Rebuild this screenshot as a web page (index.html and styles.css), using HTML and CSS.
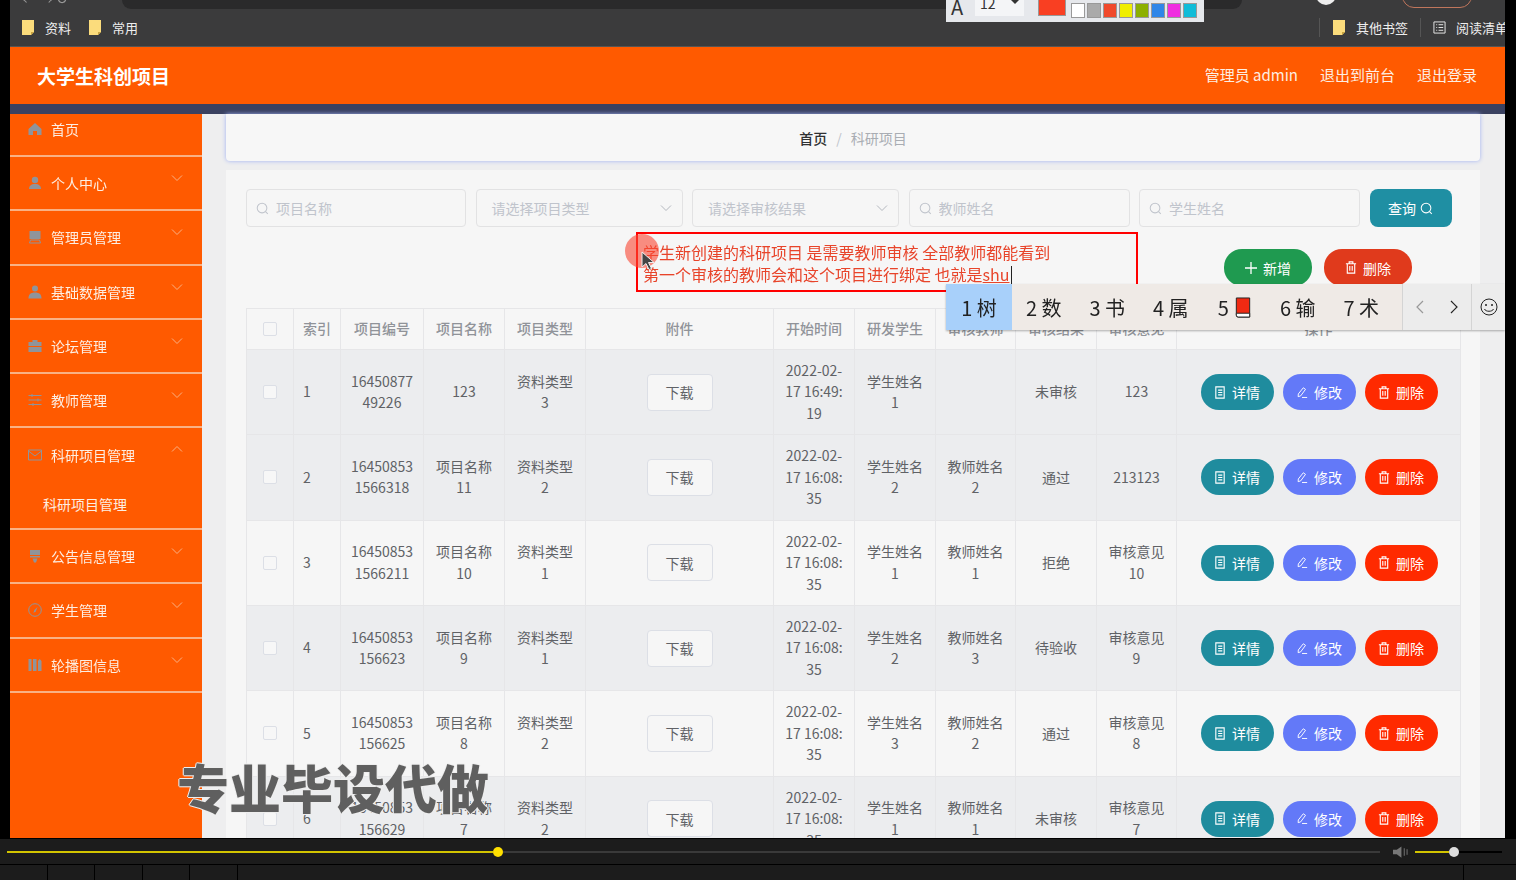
FILE: index.html
```html
<!DOCTYPE html>
<html lang="zh-CN">
<head>
  <meta charset="UTF-8" />
  <title>大学生科创项目</title>
  <link rel="stylesheet" href="styles.css">
</head>
<body>
  <svg class="defs" width="0" height="0">
    <symbol id="i-search" viewBox="0 0 14 14"><circle cx="6.5" cy="6.5" r="5.2" fill="none" stroke="currentColor" stroke-width="1.1"/><path d="M10.3 10.3l2.4 2.4" stroke="currentColor" stroke-width="1.1"/></symbol>
    <symbol id="i-down" viewBox="0 0 12 12"><path d="M1 3.5l5 5 5-5" fill="none" stroke="currentColor" stroke-width="1"/></symbol>
    <symbol id="i-up" viewBox="0 0 12 12"><path d="M1 8.5l5-5 5 5" fill="none" stroke="currentColor" stroke-width="1"/></symbol>
    <symbol id="i-doc" viewBox="0 0 12 14"><path d="M1.5 1h9v12h-9zM4 4.5h4.5M4 7h4.5M4 9.5h4.5" fill="none" stroke="currentColor" stroke-width="1.2"/></symbol>
    <symbol id="i-edit" viewBox="0 0 14 14"><path d="M8.5 1.5l2.6 1.8-5.6 7.6-3 1 .2-3.2zM7 12.8h6" fill="none" stroke="currentColor" stroke-width="1.1"/></symbol>
    <symbol id="i-trash" viewBox="0 0 12 14"><path d="M.5 3h11M4 3V1h4v2M2 3v10h8V3M4.7 5.5v5M7.3 5.5v5" fill="none" stroke="currentColor" stroke-width="1.2"/></symbol>
    <symbol id="i-folder" viewBox="0 0 12 15"><path d="M0 0h12v12l-3 3H0z" fill="#fbdc7c"/><path d="M9 15v-3h3z" fill="#c9a440"/></symbol>
  </svg>

  <div class="screen">
    <div class="browser">
      <div class="browser-top">
        <span class="nav-dots">&#8592; &#8594; &#8635;</span>
        <div class="url-bar"></div>
        <span class="profile-dot"></span>
        <span class="update-pill"></span>
      </div>
      <div class="bookmarks">
        <span class="mark"><svg class="folder"><use href="#i-folder"/></svg>资料</span>
        <span class="mark"><svg class="folder"><use href="#i-folder"/></svg>常用</span>
        <span class="mark mark-other"><svg class="folder"><use href="#i-folder"/></svg>其他书签</span>
        <span class="mark mark-read">
          <svg class="list-icon" viewBox="0 0 14 14"><path d="M1 1h12v12H1zM3.5 4h1M6 4h5M3.5 7h1M6 7h5M3.5 10h1M6 10h5" fill="none" stroke="currentColor"/></svg>阅读清单
        </span>
      </div>
    </div>

    <header class="topbar">
      <div class="brand">大学生科创项目</div>
      <nav class="top-links">
        <span>管理员 admin</span>
        <span>退出到前台</span>
        <span>退出登录</span>
      </nav>
    </header>
    <div class="navy-strip"></div>

    <div class="app">
      <aside class="sidebar">
        <div class="menu-item first">
          <svg class="menu-icon" viewBox="0 0 14 14"><path d="M7 1L0.5 7v6h4.5V9h4v4h4.5V7z" fill="currentColor"/></svg>首页
        </div>
        <div class="menu-item">
          <svg class="menu-icon" viewBox="0 0 14 14"><circle cx="7" cy="4" r="3.2" fill="currentColor"/><path d="M1 13c0-3 2-5 6-5s6 2 6 5z" fill="currentColor"/></svg>个人中心
          <svg class="chevron"><use href="#i-down"/></svg>
        </div>
        <div class="menu-item">
          <svg class="menu-icon" viewBox="0 0 14 14"><path d="M1.500 1h11v8h-11z" fill="currentColor"/><path d="M2.500 10h9l1 3h-11z" fill="none" stroke="currentColor"/></svg>管理员管理
          <svg class="chevron"><use href="#i-down"/></svg>
        </div>
        <div class="menu-item">
          <svg class="menu-icon" viewBox="0 0 14 14"><circle cx="7" cy="3.600" r="3" fill="currentColor"/><path d="M0.500 13.500c0-4 2-6 6.500-6s6.500 2 6.500 6z" fill="currentColor"/></svg>基础数据管理
          <svg class="chevron"><use href="#i-down"/></svg>
        </div>
        <div class="menu-item">
          <svg class="menu-icon" viewBox="0 0 14 14"><path d="M4.500 3V1h5v2h4v4h-13V3zM0.500 8h13v5h-13z" fill="currentColor"/></svg>论坛管理
          <svg class="chevron"><use href="#i-down"/></svg>
        </div>
        <div class="menu-item">
          <svg class="menu-icon" viewBox="0 0 14 14"><path d="M0.500 2.500h13M0.500 7h13M0.500 11.500h13M4 1v3M10 5.500v3M5 10v3" fill="none" stroke="currentColor"/></svg>教师管理
          <svg class="chevron"><use href="#i-down"/></svg>
        </div>
        <div class="menu-group">
          <div class="menu-item open">
            <svg class="menu-icon" viewBox="0 0 14 14"><path d="M0.500 2h13v10h-13zM0.500 3l6.500 5 6.500-5" fill="none" stroke="currentColor"/></svg>科研项目管理
            <svg class="chevron"><use href="#i-up"/></svg>
          </div>
          <div class="submenu-item">科研项目管理</div>
        </div>
        <div class="menu-item">
          <svg class="menu-icon" viewBox="0 0 14 14"><path d="M2 1h10v5H2zM2 7h10v1.500H2zM4.500 9.500h5L8 13.500H6z" fill="currentColor"/></svg>公告信息管理
          <svg class="chevron"><use href="#i-down"/></svg>
        </div>
        <div class="menu-item">
          <svg class="menu-icon" viewBox="0 0 14 14"><circle cx="7" cy="7" r="6.300" fill="none" stroke="currentColor"/><path d="M9.500 4L7.800 8.200 5.500 10l.8-3z" fill="currentColor"/></svg>学生管理
          <svg class="chevron"><use href="#i-down"/></svg>
        </div>
        <div class="menu-item">
          <svg class="menu-icon" viewBox="0 0 14 14"><path d="M0.500 1h3v12h-3zM5 1h3.500v12H5zM10 3l1.700-2 1.800 2v10H10z" fill="currentColor"/></svg>轮播图信息
          <svg class="chevron"><use href="#i-down"/></svg>
        </div>
      </aside>

      <main class="main">
        <div class="breadcrumb">
          <b>首页</b><i>/</i><span>科研项目</span>
        </div>

        <section class="card">
          <div class="filters">
            <label class="field w-220"><svg class="field-icon"><use href="#i-search"/></svg><input placeholder="项目名称"></label>
            <div class="field select w-207"><span>请选择项目类型</span><svg class="field-arrow"><use href="#i-down"/></svg></div>
            <div class="field select w-207"><span>请选择审核结果</span><svg class="field-arrow"><use href="#i-down"/></svg></div>
            <label class="field w-221"><svg class="field-icon"><use href="#i-search"/></svg><input placeholder="教师姓名"></label>
            <label class="field w-221"><svg class="field-icon"><use href="#i-search"/></svg><input placeholder="学生姓名"></label>
            <button class="btn-query">查询<svg class="query-icon"><use href="#i-search"/></svg></button>
          </div>

          <div class="actions">
            <button class="btn-round green"><svg class="plus" viewBox="0 0 12 12"><path d="M6 0v12M0 6h12" stroke="currentColor" stroke-width="1.300"/></svg>新增</button>
            <button class="btn-round orange"><svg class="btn-icon"><use href="#i-trash"/></svg>删除</button>
          </div>

          <table class="grid">
            <colgroup>
              <col class="c47"><col class="c47"><col class="c83"><col class="c81"><col class="c81"><col class="c188">
              <col class="c81"><col class="c81"><col class="c80"><col class="c81"><col class="c80"><col class="c284">
            </colgroup>
            <thead>
              <tr>
                <th><span class="check"></span></th>
                <th class="left">索引</th><th>项目编号</th><th>项目名称</th><th>项目类型</th><th>附件</th>
                <th>开始时间</th><th>研发学生</th><th>审核教师</th><th>审核结果</th><th>审核意见</th><th>操作</th>
              </tr>
            </thead>
            <tbody>
              <tr class="dark">
                <td><span class="check"></span></td><td class="left">1</td>
                <td>16450877<wbr>49226</td><td>123</td><td>资料类型 3</td>
                <td><button class="btn-dl">下载</button></td>
                <td>2022-02-<wbr>17 16:49:<wbr>19</td><td>学生姓名 1</td><td></td><td>未审核</td><td>123</td>
                <td><div class="ops">
                  <button class="op teal"><svg class="btn-icon"><use href="#i-doc"/></svg>详情</button>
                  <button class="op blue"><svg class="btn-icon"><use href="#i-edit"/></svg>修改</button>
                  <button class="op red"><svg class="btn-icon"><use href="#i-trash"/></svg>删除</button>
                </div></td>
              </tr>
              <tr class="dark">
                <td><span class="check"></span></td><td class="left">2</td>
                <td>16450853<wbr>1566318</td><td>项目名称 11</td><td>资料类型 2</td>
                <td><button class="btn-dl">下载</button></td>
                <td>2022-02-<wbr>17 16:08:<wbr>35</td><td>学生姓名 2</td><td>教师姓名 2</td><td>通过</td><td>213123</td>
                <td><div class="ops">
                  <button class="op teal"><svg class="btn-icon"><use href="#i-doc"/></svg>详情</button>
                  <button class="op blue"><svg class="btn-icon"><use href="#i-edit"/></svg>修改</button>
                  <button class="op red"><svg class="btn-icon"><use href="#i-trash"/></svg>删除</button>
                </div></td>
              </tr>
              <tr>
                <td><span class="check"></span></td><td class="left">3</td>
                <td>16450853<wbr>1566211</td><td>项目名称 10</td><td>资料类型 1</td>
                <td><button class="btn-dl">下载</button></td>
                <td>2022-02-<wbr>17 16:08:<wbr>35</td><td>学生姓名 1</td><td>教师姓名 1</td><td>拒绝</td><td>审核意见 10</td>
                <td><div class="ops">
                  <button class="op teal"><svg class="btn-icon"><use href="#i-doc"/></svg>详情</button>
                  <button class="op blue"><svg class="btn-icon"><use href="#i-edit"/></svg>修改</button>
                  <button class="op red"><svg class="btn-icon"><use href="#i-trash"/></svg>删除</button>
                </div></td>
              </tr>
              <tr class="dark">
                <td><span class="check"></span></td><td class="left">4</td>
                <td>16450853<wbr>156623</td><td>项目名称 9</td><td>资料类型 1</td>
                <td><button class="btn-dl">下载</button></td>
                <td>2022-02-<wbr>17 16:08:<wbr>35</td><td>学生姓名 2</td><td>教师姓名 3</td><td>待验收</td><td>审核意见 9</td>
                <td><div class="ops">
                  <button class="op teal"><svg class="btn-icon"><use href="#i-doc"/></svg>详情</button>
                  <button class="op blue"><svg class="btn-icon"><use href="#i-edit"/></svg>修改</button>
                  <button class="op red"><svg class="btn-icon"><use href="#i-trash"/></svg>删除</button>
                </div></td>
              </tr>
              <tr>
                <td><span class="check"></span></td><td class="left">5</td>
                <td>16450853<wbr>156625</td><td>项目名称 8</td><td>资料类型 2</td>
                <td><button class="btn-dl">下载</button></td>
                <td>2022-02-<wbr>17 16:08:<wbr>35</td><td>学生姓名 3</td><td>教师姓名 2</td><td>通过</td><td>审核意见 8</td>
                <td><div class="ops">
                  <button class="op teal"><svg class="btn-icon"><use href="#i-doc"/></svg>详情</button>
                  <button class="op blue"><svg class="btn-icon"><use href="#i-edit"/></svg>修改</button>
                  <button class="op red"><svg class="btn-icon"><use href="#i-trash"/></svg>删除</button>
                </div></td>
              </tr>
              <tr class="dark">
                <td><span class="check"></span></td><td class="left">6</td>
                <td>16450853<wbr>156629</td><td>项目名称 7</td><td>资料类型 2</td>
                <td><button class="btn-dl">下载</button></td>
                <td>2022-02-<wbr>17 16:08:<wbr>35</td><td>学生姓名 1</td><td>教师姓名 1</td><td>未审核</td><td>审核意见 7</td>
                <td><div class="ops">
                  <button class="op teal"><svg class="btn-icon"><use href="#i-doc"/></svg>详情</button>
                  <button class="op blue"><svg class="btn-icon"><use href="#i-edit"/></svg>修改</button>
                  <button class="op red"><svg class="btn-icon"><use href="#i-trash"/></svg>删除</button>
                </div></td>
              </tr>
            </tbody>
          </table>
        </section>
      </main>
    </div>
  </div>

  <div class="player">
    <div class="player-bar">
      <div class="progress"><span class="progress-done"></span><span class="progress-thumb"></span><span class="progress-rest"></span></div>
      <svg class="speaker" viewBox="0 0 16 14"><path d="M0 4.500h4L9 1v12L4 9.500H0z" fill="#777"/><path d="M12 3v8M15 4v6" stroke="#777"/></svg>
      <div class="volume"><span class="volume-done"></span><span class="volume-thumb"></span><span class="volume-rest"></span></div>
    </div>
    <div class="player-tabs">
      <span></span><span></span><span></span><span></span><span></span><span class="tab-fill"></span><span class="tab-end"></span>
    </div>
  </div>

  <!-- stuff drawn over the recording -->
  <div class="palette">
    <span class="pal-a">A</span>
    <span class="pal-size">12<i></i></span>
    <span class="pal-current"></span>
    <div class="pal-swatches">
      <span class="s1"></span><span class="s2"></span><span class="s3"></span><span class="s4"></span>
      <span class="s5"></span><span class="s6"></span><span class="s7"></span><span class="s8"></span>
    </div>
  </div>

  <div class="note">学生新创建的科研项目 是需要教师审核 全部教师都能看到<br>第一个审核的教师会和这个项目进行绑定 也就是<u>shu</u><span class="caret"></span></div>
  <div class="click-dot"></div>
  <svg class="pointer" viewBox="0 0 14 20"><path d="M1 1v15l4-3.500 3 6 2.500-1-3-6H13z" fill="#444" stroke="#eee"/></svg>

  <div class="ime">
    <span class="cand on">1 树</span><span class="cand">2 数</span><span class="cand">3 书</span><span class="cand">4 属</span>
    <span class="cand">5 <svg class="book" viewBox="0 0 16 22"><path d="M1 1h14v20H3a2 2 0 0 1-2-2z" fill="#f02a12" stroke="#222"/><path d="M1 17h14v4H3a2 2 0 0 1-2-2z" fill="#fff" stroke="#222"/></svg></span>
    <span class="cand">6 输</span><span class="cand">7 术</span>
    <span class="ime-page">
      <svg class="ime-arrow dim" viewBox="0 0 8 14"><path d="M7 1L1 7l6 6" fill="none" stroke="currentColor" stroke-width="1.200"/></svg>
      <svg class="ime-arrow" viewBox="0 0 8 14"><path d="M1 1l6 6-6 6" fill="none" stroke="currentColor" stroke-width="1.200"/></svg>
    </span>
    <span class="ime-emoji">
      <svg viewBox="0 0 18 18"><circle cx="9" cy="9" r="8" fill="none" stroke="#222"/><circle cx="6" cy="7" r="1" fill="#222"/><circle cx="12" cy="7" r="1" fill="#222"/><path d="M4.500 11c1 3 8 3 9 0" fill="none" stroke="#222"/></svg>
    </span>
  </div>

  <div class="watermark">专业毕设代做</div>
</body>
</html>
```

FILE: styles.css
```css
* { box-sizing: border-box; }

html, body { height: 100%; }

body {
  margin: 0;
  height: 880px;
  overflow: hidden;
  position: relative;
  background: #000;
  font-family: "Noto Sans CJK SC", "Open Sans", sans-serif;
  font-size: 14px;
  color: #606266;
}

.defs { position: absolute; }

button { font-family: inherit; border: none; padding: 0; cursor: pointer; }

.screen {
  margin: 0 11px 0 10px;
  height: 838px;
  overflow: hidden;
  display: flex;
  flex-direction: column;
  filter: blur(0.3px);
}

/* browser chrome */
.browser { height: 47px; flex: none; background: #3b3b3c; border-bottom: 1px solid #555; }

.browser-top { height: 9px; overflow: hidden; display: flex; position: relative; }

.nav-dots { width: 112px; padding-left: 12px; margin-top: -12px; color: #999; font-size: 14px; }

.url-bar { width: 1120px; height: 9px; background: #2a2a2b; border-radius: 0 0 10px 10px; }

.profile-dot { width: 20px; height: 20px; margin: -15px 0 0 74px; border-radius: 50%; background: #eee; }

.update-pill { width: 70px; height: 24px; margin: -16px 0 0 66px; border: 1px solid #c0765c; border-radius: 12px; }

.bookmarks { height: 37px; display: flex; align-items: center; padding-left: 12px; color: #eee; font-size: 13px; }

.mark { display: flex; align-items: center; margin-right: 18px; }

.folder { width: 12px; height: 15px; margin-right: 11px; }

.mark-other { margin-left: auto; margin-right: 12px; padding-left: 13px; border-left: 1px solid #555; }

.mark-read { margin-right: 0; width: 85px; padding-left: 12px; border-left: 1px solid #555; white-space: nowrap; overflow: hidden; }

.list-icon { width: 13px; height: 13px; flex: none; margin-right: 10px; }

/* site header */
.topbar {
  height: 57px;
  flex: none;
  background: #ff5a00;
  display: flex;
  align-items: center;
  justify-content: space-between;
  padding: 0 28px 0 27px;
  color: #fff;
}

.brand { font-size: 19px; font-weight: 700; }

.top-links { display: flex; gap: 22px; font-size: 15px; margin-top: -2px; color: #fdeee2; }

.navy-strip { height: 10px; flex: none; background: #3a4160; }

.app { flex: 1; display: flex; min-height: 0; }

/* sidebar */
.sidebar { width: 192px; flex: none; background: #ff5a00; overflow: hidden; color: #fdeee2; }

.menu-item {
  height: 54.2px;
  display: flex;
  align-items: center;
  padding: 0 18px;
  border-bottom: 2px solid #f9b184;
  position: relative;
}

.menu-item.first { margin-top: -11px; }

.menu-group { border-bottom: 2px solid #f9b184; }

.menu-group .menu-item { border-bottom: none; height: 54px; }

.menu-icon { width: 14px; height: 14px; margin-right: 9px; color: #8f949b; flex: none; }

.chevron { width: 12px; height: 12px; position: absolute; right: 19px; top: 15px; color: #f9b184; }

.submenu-item { height: 46px; padding-left: 33px; line-height: 44px; }

/* main */
.main { flex: 1; min-width: 0; background: #eeeeef; padding: 0 25px 0 24px; }

.breadcrumb {
  height: 47px;
  background: #f7f7f7;
  border-radius: 0 0 4px 4px;
  box-shadow: 0 0 4px #9fb0f2;
  display: flex;
  align-items: center;
  justify-content: center;
  color: #a9adb3;
}

.breadcrumb b { color: #303133; font-weight: 500; }

.breadcrumb i { font-style: normal; margin: 0 9px; color: #c0c4cc; }

.card { margin-top: 9px; height: 700px; background: #f6f6f6; padding: 19px 20px; }

.filters { display: flex; gap: 9.5px; height: 38px; }

.field {
  height: 38px;
  display: flex;
  align-items: center;
  padding-left: 9px;
  border: 1px solid #e2e2e3;
  border-radius: 4px;
  background: #f6f6f6;
  color: #c0c4cc;
}

.w-220 { width: 220px; }
.w-207 { width: 207px; }
.w-221 { width: 221px; }

.field input {
  border: none;
  outline: none;
  background: transparent;
  width: 100%;
  min-width: 0;
  padding: 0;
  font: inherit;
}

.field input::placeholder { color: #c0c4cc; opacity: 1; }

.field-icon { width: 13px; height: 13px; margin-right: 7px; flex: none; }

.select { justify-content: space-between; padding: 0 10px 0 15px; }

.field-arrow { width: 12px; height: 12px; color: #b4b8bf; }

.btn-query {
  width: 82px;
  height: 38px;
  border-radius: 8px;
  background: #1f8fa3;
  color: #fff;
  font-size: 14px;
  display: flex;
  align-items: center;
  justify-content: center;
  gap: 4px;
}

.query-icon { width: 13px; height: 13px; }

.actions { display: flex; justify-content: flex-end; gap: 12px; height: 37px; margin-top: 22px; padding-right: 48px; }

.btn-round {
  width: 88px;
  height: 37px;
  border-radius: 18px;
  color: #fff;
  font-size: 14px;
  display: flex;
  align-items: center;
  justify-content: center;
  gap: 6px;
}

.green { background: #1f9a50; }
.orange { background: #e03a1c; }

.plus { width: 12px; height: 12px; }

.btn-icon { width: 12px; height: 13px; flex: none; }

/* table */
.grid {
  margin-top: 22px;
  width: 1214px;
  table-layout: fixed;
  border-collapse: collapse;
  background: #f6f6f6;
}

.c47 { width: 47px; }
.c80 { width: 80px; }
.c81 { width: 81px; }
.c83 { width: 83px; }
.c188 { width: 188px; }
.c284 { width: 284px; }

.grid th, .grid td {
  border: 1px solid #e6e6e8;
  padding: 0 9px;
  text-align: center;
  line-height: 21.5px;
  font-size: 14px;
}

.grid th { height: 41px; color: #909399; font-weight: 500; }

.grid td { height: 85.33px; }

.grid .left { text-align: left; }

.grid .dark td { background: #ecedef; }

.check {
  display: block;
  width: 14px;
  height: 14px;
  margin: 0 auto;
  background: #f7f7f7;
  border: 1px solid #dcdfe6;
  border-radius: 2px;
}

.btn-dl {
  width: 66px;
  height: 37px;
  background: #f6f6f6;
  border: 1px solid #dcdfe6;
  border-radius: 4px;
  color: #606266;
  font-size: 14px;
}

.ops { display: flex; justify-content: center; gap: 9px; margin-left: 1px; }

.op {
  width: 73px;
  height: 36px;
  border-radius: 18px;
  color: #fff;
  font-size: 14px;
  display: flex;
  align-items: center;
  justify-content: center;
  gap: 6px;
}

.teal { background: #1f8c9e; }
.blue { background: #6379f8; }
.red { background: #ff2a00; }

/* video player */
.player { height: 42px; background: #1c1c1c; border-top: 1px solid #000; display: flex; flex-direction: column; }

.player-bar { height: 26px; display: flex; align-items: center; padding: 0 14px 0 7px; border-bottom: 1px solid #000; }

.progress { width: 1373px; display: flex; align-items: center; }

.progress-done { width: 486px; height: 2px; background: #d2c400; }

.progress-thumb, .volume-thumb { width: 10px; height: 10px; border-radius: 50%; flex: none; }

.progress-thumb { background: #ffe000; }

.progress-rest { flex: 1; height: 2px; background: #3a3a3a; }

.speaker { width: 15px; height: 14px; margin: 0 7px 0 13px; }

.volume { flex: 1; display: flex; align-items: center; }

.volume-done { width: 34px; height: 2px; background: #d2c400; }

.volume-thumb { background: #ddd; }

.volume-rest { flex: 1; height: 2px; background: #000; }

.player-tabs { flex: 1; display: flex; }

.player-tabs span { width: 47.5px; border-right: 1px solid #000; }

.player-tabs .tab-fill { width: 1226.500px; }

.player-tabs .tab-end { border-right: none; flex: 1; }

/* overlays on top of the recording */
.palette {
  position: absolute;
  left: 946px;
  top: 0;
  width: 258px;
  height: 22px;
  background: #e6e8ec;
  overflow: hidden;
  color: #333;
}

.pal-a { position: absolute; left: 5px; top: -8px; font-size: 20px; }

.pal-size {
  position: absolute;
  left: 29px;
  top: -4px;
  width: 49px;
  height: 20px;
  padding-left: 5px;
  background: #f4f5f7;
  font-size: 14px;
  line-height: 14px;
}

.pal-size i {
  position: absolute;
  right: 5px;
  top: 4px;
  border: 4px solid transparent;
  border-top-color: #333;
}

.pal-current { position: absolute; left: 92px; top: -3px; width: 28px; height: 19px; background: #f93f22; border: 1px solid #999; }

.pal-swatches { position: absolute; left: 125px; top: 3px; display: flex; gap: 2px; }

.pal-swatches span { width: 14px; height: 15px; border: 1px solid #999; }

.s1 { background: #fff; }
.s2 { background: #aaa; }
.s3 { background: #f0492c; }
.s4 { background: #f0ee00; }
.s5 { background: #8cb000; }
.s6 { background: #2f86e8; }
.s7 { background: #f02ee0; }
.s8 { background: #10bcd8; }

.note {
  position: absolute;
  left: 636px;
  top: 232px;
  width: 502px;
  height: 60px;
  padding: 7px 5px;
  border: 2px solid #f00;
  color: #e8442a;
  font-size: 16px;
  line-height: 22px;
  white-space: nowrap;
}

.caret { display: inline-block; width: 1px; height: 19px; margin-left: 1px; background: #222; vertical-align: -4px; }

.click-dot { position: absolute; left: 625px; top: 234px; width: 34px; height: 34px; border-radius: 50%; background: rgba(250, 70, 50, 0.6); }

.pointer { position: absolute; left: 641px; top: 251px; width: 14px; height: 20px; }

.ime {
  position: absolute;
  left: 946px;
  top: 284px;
  width: 559px;
  height: 46px;
  display: flex;
  background: #efeae6;
  box-shadow: 0 1px 2px rgba(0, 0, 0, 0.3);
  color: #222;
  font-size: 20px;
}

.cand { width: 63.500px; display: flex; align-items: center; justify-content: center; gap: 6px; white-space: nowrap; }

.cand.on { width: 66px; background: #a8d0fa; }

.book { width: 16px; height: 21px; }

.ime-page {
  width: 70px;
  margin-left: 9px;
  display: flex;
  align-items: center;
  justify-content: space-around;
  background: #ececec;
  border-left: 1px solid #d4d4d4;
  border-right: 1px solid #d4d4d4;
}

.ime-arrow { width: 8px; height: 14px; color: #222; }

.ime-arrow.dim { color: #999; }

.ime-emoji { flex: 1; display: flex; align-items: center; justify-content: center; background: #ececec; }

.ime-emoji svg { width: 18px; height: 18px; }

.watermark {
  position: absolute;
  left: 177px;
  top: 750px;
  font-size: 52px;
  line-height: 74px;
  font-weight: 900;
  white-space: nowrap;
  color: rgba(0, 0, 0, 0.6);
  text-shadow: -1px 0 #eee, 1px 0 #eee, 0 -1px #eee, 0 1px #eee;
}
```
